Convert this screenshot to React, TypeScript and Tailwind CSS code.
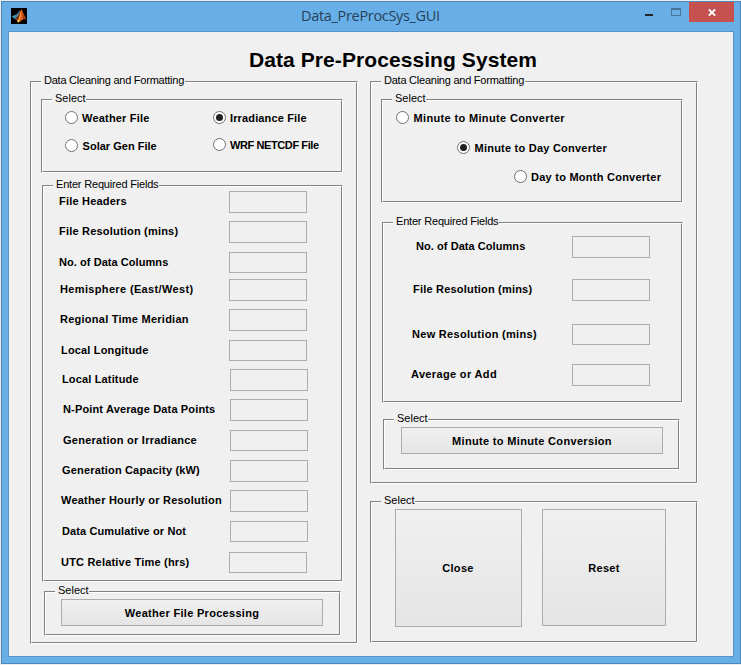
import type { ReactNode } from "react";

type Tracked = { text: string; tracking: string };

function Panel({
  legend,
  legendStyle,
  className,
  children,
}: {
  legend: string;
  legendStyle: string;
  className: string;
  children: ReactNode;
}) {
  return (
    <section
      className={`flex shrink-0 border border-t-[#828282] border-l-[#828282] border-r-white border-b-white ${className}`}
    >
      <div className="flex flex-1 flex-col items-start border border-t-white border-l-white border-r-[#828282] border-b-[#828282]">
        <h2
          className={`-mt-[10px] ml-[9px] h-[14px] shrink-0 whitespace-nowrap bg-[#f0f0f0] pl-[3px] text-[11px] leading-[14px] ${legendStyle}`}
        >
          {legend}
        </h2>
        {children}
      </div>
    </section>
  );
}

function Label({ text, tracking }: Tracked) {
  return (
    <span className={`whitespace-nowrap text-[11px] font-bold leading-[14px] ${tracking}`}>
      {text}
    </span>
  );
}

function Radio({
  text,
  tracking,
  checked = false,
  className = "",
}: Tracked & { checked?: boolean; className?: string }) {
  return (
    <label className={`flex h-[14px] items-start gap-1 ${className}`}>
      <span className="flex size-[13px] shrink-0 items-center justify-center rounded-full border border-[#707070] bg-white">
        {checked && <span className="size-[7px] rounded-full bg-[#212121]" />}
      </span>
      <Label text={text} tracking={tracking} />
    </label>
  );
}

function Button({ text, tracking, className }: Tracked & { className: string }) {
  return (
    <button
      type="button"
      className={`flex shrink-0 items-center justify-center border border-[#acacac] bg-linear-to-b from-[#f0f0f0] to-[#e5e5e5] ${className}`}
    >
      <Label text={text} tracking={tracking} />
    </button>
  );
}

type Field = Tracked & { row: string; indent: string; box: string };

function FieldRow({ field, columns }: { field: Field; columns: string }) {
  return (
    <div className={`grid shrink-0 items-start ${columns} ${field.row}`}>
      <div className={`flex pt-[3px] ${field.indent}`}>
        <Label text={field.text} tracking={field.tracking} />
      </div>
      <div className={`w-[78px] border border-[#abadb3] ${field.box}`} />
    </div>
  );
}

const fileFields: Field[] = [
  { text: "File Headers", tracking: "tracking-[0.2px]", row: "h-[30px]", indent: "pl-[15px]", box: "h-[22px]" },
  { text: "File Resolution (mins)", tracking: "tracking-[0.2px]", row: "h-[31px]", indent: "pl-[15px]", box: "h-[22px]" },
  { text: "No. of Data Columns", tracking: "tracking-[0.06px]", row: "h-[27px]", indent: "pl-[15px]", box: "h-[21px]" },
  { text: "Hemisphere (East/West)", tracking: "tracking-[0.35px]", row: "h-[30px]", indent: "pl-[16px]", box: "h-[22px]" },
  { text: "Regional Time Meridian", tracking: "tracking-[0.25px]", row: "h-[31px]", indent: "pl-[16px]", box: "h-[22px]" },
  { text: "Local Longitude", tracking: "tracking-[0.17px]", row: "h-[29px]", indent: "pl-[17px]", box: "h-[21px]" },
  { text: "Local Latitude", tracking: "tracking-[0.15px]", row: "h-[30px]", indent: "pl-[18px]", box: "ml-px h-[22px]" },
  { text: "N-Point Average Data Points", tracking: "tracking-[0.15px]", row: "h-[31px]", indent: "pl-[19px]", box: "ml-px h-[22px]" },
  { text: "Generation or Irradiance", tracking: "tracking-[0.26px]", row: "h-[30px]", indent: "pl-[19px]", box: "ml-px h-[21px]" },
  { text: "Generation Capacity (kW)", tracking: "tracking-[0.17px]", row: "h-[30px]", indent: "pl-[18px]", box: "ml-px h-[22px]" },
  { text: "Weather Hourly or Resolution", tracking: "tracking-[0.21px]", row: "h-[31px]", indent: "pl-[17px]", box: "ml-px h-[22px]" },
  { text: "Data Cumulative or Not", tracking: "tracking-[0.11px]", row: "h-[31px]", indent: "pl-[18px]", box: "ml-px h-[21px]" },
  { text: "UTC Relative Time (hrs)", tracking: "tracking-[0.2px]", row: "h-[21px]", indent: "pl-[17px]", box: "h-[21px]" },
];

const converterFields: Field[] = [
  { text: "No. of Data Columns", tracking: "tracking-[0.06px]", row: "h-[43px]", indent: "pl-[32px]", box: "h-[22px]" },
  { text: "File Resolution (mins)", tracking: "tracking-[0.2px]", row: "h-[45px]", indent: "pl-[29px]", box: "h-[22px]" },
  { text: "New Resolution (mins)", tracking: "tracking-[0.3px]", row: "h-[40px]", indent: "pl-[28px]", box: "h-[21px]" },
  { text: "Average or Add", tracking: "tracking-[0.35px]", row: "h-[22px]", indent: "pl-[27px]", box: "h-[22px]" },
];

const cleaningLegend = "w-[144px] tracking-[-0.24px]";
const fieldsLegend = "w-[106px] tracking-[-0.19px]";
const selectLegend = "w-[34px]";

function MatlabIcon() {
  return (
    <svg className="mt-[6px] ml-[9px] size-4 shrink-0" viewBox="0 0 16 16">
      <rect width="16" height="16" fill="#000" />
      <path d="M0.6 8.6 4.4 6.8 6.6 8.2 4 11.2Z" fill="#3f8fae" />
      <path d="M4.4 6.8C6 6.4 7.2 4.6 8.6 2.6L9.2 4.2 6.4 9 4.6 8.4Z" fill="#4e7f93" />
      <path d="M4 11.2C6 10.6 8 7 10.2 1.2 11.6 2 13.2 8 15.6 11.6 13.8 10.4 12.4 10.8 11 12 9.6 13.4 8.2 14.4 7 14.4 6.4 12.6 5.6 11.4 4 11.2Z" fill="#e0601f" />
      <path d="M4 11.2C5.6 10.8 7.4 8.6 8.6 5.6 8.4 9 7.8 12 7 14.4 6.4 12.6 5.6 11.4 4 11.2Z" fill="#7d2a1c" />
      <path d="M10.2 2C10.8 5 10 9.6 7.4 14.2L6.4 12.8C8.4 10 9.6 6 10.2 2Z" fill="#f6a13a" />
      <path d="M6.2 12.6 8 11.6 8.4 13.4 7 14.4Z" fill="#f5d04c" />
      <path d="M10.8 2.2C12 4.4 13 8.4 15.4 11.4 14 10.4 13 10.6 12.2 11 11.8 8 11.4 5 10.8 2.2Z" fill="#a8391a" />
    </svg>
  );
}

export default function App() {
  return (
    <div className="h-[665px] w-[741px] overflow-hidden bg-[#ececec] pt-px pl-px font-['Liberation_Sans',Arial,sans-serif] text-black">
      <div className="flex h-[663px] w-[740px] flex-col border border-[#4b89bd] bg-[#68afe8]">
        <header className="flex h-[29px] shrink-0 items-start">
          <MatlabIcon />
          <h1 className="mt-[3px] ml-[274px] w-[149px] shrink-0 whitespace-nowrap font-['Open_Sans','Noto_Sans',sans-serif] text-[14.5px] leading-[22px] tracking-[-0.32px] text-[#27415a]">
            Data_PreProcSys_GUI
          </h1>
          <svg className="ml-[194px] h-5 w-[38px] shrink-0" viewBox="0 0 38 20" shapeRendering="crispEdges">
            <rect x="1" y="12" width="8" height="2" fill="#262626" />
            <path d="M27 6h10v8H27zM28 8v5h8V8z" fill="#4a7596" fillRule="evenodd" />
          </svg>
          <div className="ml-[7px] flex h-5 w-[45px] shrink-0 items-center justify-center bg-[#c75050]">
            <svg className="mt-px h-[7px] w-2" viewBox="0 0 8 7">
              <path d="M0.8 0.3 7.2 6.7M7.2 0.3 0.8 6.7" stroke="#fff" strokeWidth="1.8" />
            </svg>
          </div>
        </header>

        <main className="ml-[6px] h-[626px] w-[726px] border border-[#5795c8] bg-[#f0f0f0]">
          <h2 className="h-[49px] whitespace-nowrap pl-[240px] pt-4 text-[21px] font-bold leading-6 tracking-[0.08px]">
            Data Pre-Processing System
          </h2>

          <div className="flex items-start gap-3 pl-[21px]">
            <Panel legend="Data Cleaning and Formatting" legendStyle={cleaningLegend} className="h-[563px] w-[328px]">
              <Panel legend="Select" legendStyle={selectLegend} className="mt-3 ml-[9px] h-[74px] w-[302px]">
                <div className="grid grid-cols-[148px_120px] items-start pl-[22px] pt-[6px]">
                  <div className="flex flex-col gap-[14px]">
                    <Radio text="Weather File" tracking="tracking-[0.2px]" />
                    <Radio text="Solar Gen File" tracking="pl-[0.6px] tracking-[0.01px]" />
                  </div>
                  <div className="flex flex-col gap-[13px]">
                    <Radio text="Irradiance File" tracking="tracking-[0.14px]" checked />
                    <Radio text="WRF NETCDF File" tracking="tracking-[-0.4px]" />
                  </div>
                </div>
              </Panel>

              <Panel legend="Enter Required Fields" legendStyle={fieldsLegend} className="mt-3 ml-[10px] h-[397px] w-[301px]">
                {fileFields.map((field) => (
                  <FieldRow key={field.text} field={field} columns="grid-cols-[185px_80px]" />
                ))}
              </Panel>

              <Panel legend="Select" legendStyle={selectLegend} className="mt-[9px] ml-3 h-[45px] w-[297px]">
                <Button text="Weather File Processing" tracking="tracking-[0.3px]" className="mt-[2px] ml-[15px] h-[27px] w-[262px]" />
              </Panel>
            </Panel>

            <div className="flex flex-col gap-[17px]">
              <Panel legend="Data Cleaning and Formatting" legendStyle={cleaningLegend} className="h-[403px] w-[328px]">
                <Panel legend="Select" legendStyle={selectLegend} className="mt-3 ml-[9px] h-[104px] w-[302px]">
                  <div className="flex flex-col items-start pl-[13px] pt-[6px]">
                    <Radio text="Minute to Minute Converter" tracking="pl-[0.5px] tracking-[0.35px]" />
                    <Radio text="Minute to Day Converter" tracking="pl-[0.5px] tracking-[0.23px]" className="mt-4 ml-[61px]" checked />
                    <Radio text="Day to Month Converter" tracking="tracking-[0.25px]" className="mt-[15px] ml-[118px]" />
                  </div>
                </Panel>

                <Panel legend="Enter Required Fields" legendStyle={fieldsLegend} className="mt-[19px] ml-[10px] h-[181px] w-[301px]">
                  <div className="pt-2">
                    {converterFields.map((field) => (
                      <FieldRow key={field.text} field={field} columns="grid-cols-[188px_80px]" />
                    ))}
                  </div>
                </Panel>

                <Panel legend="Select" legendStyle={selectLegend} className="mt-4 ml-[11px] h-[51px] w-[297px]">
                  <Button text="Minute to Minute Conversion" tracking="tracking-[0.33px]" className="mt-[2px] ml-4 h-[27px] w-[262px]" />
                </Panel>
              </Panel>

              <Panel legend="Select" legendStyle={selectLegend} className="h-[142px] w-[328px]">
                <div className="flex items-start gap-5 pl-[23px] pt-[2px]">
                  <Button text="Close" tracking="pr-px tracking-[0.3px]" className="h-[118px] w-[127px]" />
                  <Button text="Reset" tracking="tracking-[0.3px]" className="h-[117px] w-[124px]" />
                </div>
              </Panel>
            </div>
          </div>
        </main>
      </div>
    </div>
  );
}
